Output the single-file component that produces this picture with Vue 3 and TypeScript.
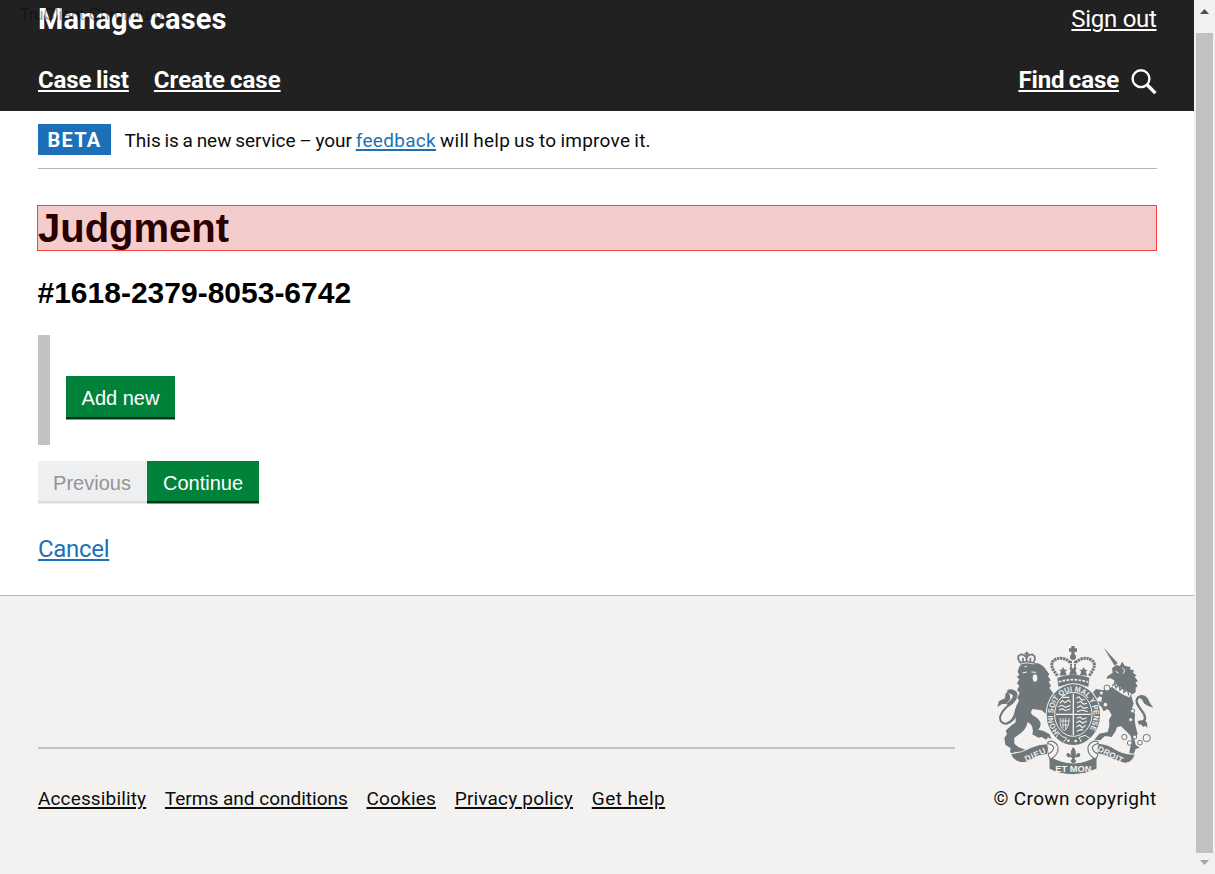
<script setup lang="ts">
interface FooterLink {
  label: string
  key: string
}

const footerLinks: FooterLink[] = [
  { label: 'Accessibility', key: 'accessibility' },
  { label: 'Terms and conditions', key: 'terms' },
  { label: 'Cookies', key: 'cookies' },
  { label: 'Privacy policy', key: 'privacy' },
  { label: 'Get help', key: 'help' },
]
</script>

<template>
  <div class="window">
    <div class="page">
      <header class="header">
        <div class="watermark">TruClient Chromium</div>
        <div class="header-top">
          <a class="service-name">Manage cases</a>
          <a class="sign-out">Sign out</a>
        </div>
        <nav class="header-nav">
          <a class="nav-link case-list">Case list</a>
          <a class="nav-link create-case">Create case</a>
          <a class="nav-link find">Find case</a>
          <svg class="search" viewBox="0 0 26 26" width="26" height="26">
            <circle cx="10" cy="9.7" r="8.4" fill="none" stroke="#fff" stroke-width="2.4" />
            <path d="M15.8 15.5 L24.4 24.1" stroke="#fff" stroke-width="3.4" />
          </svg>
        </nav>
      </header>

      <main class="main">
        <div class="phase">
          <strong class="tag">BETA</strong>
          <span class="phase-text">This is a new service – your <a class="link feedback">feedback</a><span class="phase-tail"> will help us to improve it.</span></span>
        </div>
        <h1 class="title">Judgment</h1>
        <h2 class="case-ref">#1618-2379-8053-6742</h2>
        <div class="collection"><button class="btn add">Add new</button></div>
        <div class="actions">
          <button class="btn previous" disabled>Previous</button>
          <button class="btn continue">Continue</button>
        </div>
        <a class="link cancel">Cancel</a>
      </main>

      <footer class="footer">
        <div class="footer-top">
          <div class="rule"></div>
          <svg class="crest" viewBox="33 30 474 390" width="158" height="130">
            <defs>
              <path id="motto-arc" d="M222 291 A61 71 0 1 1 308 291" />
            </defs>
            <g fill="#6f777b">
              <!-- lion -->
              <path d="M107 92 L104 82 Q126 74 147 82 L146 90 Z" />
              <path d="M103 94 Q127 82 159 85 Q176 91 184 106 L193 118 L189 124 L197 136 L191 140 L198 152 L193 159 L203 172 L208 190 L196 226 L203 250 L198 262 L190 256 L186 240 L170 226 L143 222 Q133 232 143 241 Q160 249 166 262 Q169 276 160 284 L176 288 L194 298 L200 313 L189 307 L184 314 L170 306 L160 308 L142 298 Q147 280 137 268 L128 261 Q124 285 100 300 L88 308 L88 326 L100 336 L123 345 L119 354 L110 351 L103 360 L92 351 L84 357 L75 351 L77 340 L61 329 L58 309 L66 298 L62 287 L78 272 L92 262 L92 248 Q88 232 94 212 L102 197 L97 188 L104 174 L96 165 L103 153 L96 145 L103 133 L95 126 L103 120 L98 110 Z" />
              <!-- supporter paws on the shield -->
              <path d="M182 208 L194 222 L206 252 L192 262 L184 250 L190 246 L180 226 Z" />
            </g>
            <g fill="none" stroke="#6f777b" stroke-linecap="round">
              <path d="M106 82 Q94 68 104 60 Q115 55 124 68 Q134 55 145 60 Q154 68 146 82" stroke-width="6" stroke-dasharray="4 5.5" />
              <path d="M125 50 V80 M114 68 V80 M136 68 V80 M119 56 H131" stroke-width="5" stroke-linecap="butt" />
              <!-- lion tail -->
              <path d="M98 224 Q92 256 66 266 Q45 268 45 246 Q50 226 78 205" stroke-width="6" />
              <path d="M66 264 Q88 256 93 222" stroke-width="5" />
            </g>
            <g fill="#6f777b">
              <path d="M68 164 Q88 160 97 174 Q100 190 84 206 L72 214 L64 206 Q84 190 84 182 Q76 172 64 178 Z" />
              <path d="M62 173 L74 178 L76 192 L64 206 L50 208 L37 216 L42 198 L60 190 Z" />
              <!-- unicorn -->
              <path d="M356 38 L398 84 L389 92 Z" />
              <path d="M381 100 L394 90 L405 93 L411 80 L420 93 L437 96 L434 103 L447 106 L444 113 L454 121 L449 126 L459 139 L451 142 L458 154 L452 158 L452 172 L438 180 L446 206 L441 219 L450 238 L449 256 L452 274 L458 298 L448 313 L452 329 L464 338 L452 342 L446 358 L433 354 L436 336 L441 323 L437 303 L424 289 L408 274 L396 276 L392 288 L380 306 L360 303 L346 316 L328 314 L343 296 L368 291 L373 274 L372 254 L380 240 L372 226 L358 216 L349 202 L351 187 L343 184 L334 194 L325 196 L329 182 L324 172 L333 162 L354 166 L376 158 L386 154 L388 136 L376 130 L364 131 L367 124 L383 113 Z" />
              <path d="M331 195 L324 204 L332 214 L348 213 L356 229 L366 223 L361 210 L348 200 Z" />
              <path d="M478 254 L486 264 L487 278 L480 272 L474 276 L468 268 L462 270 L458 258 Z" />
              <path d="M456 186 Q474 172 488 190 Q494 206 505 218 L488 212 L478 206 L470 192 Z" />
            </g>
            <path d="M472 264 Q486 252 476 236 L461 214 Q448 194 462 186 Q474 182 484 196" fill="none" stroke="#6f777b" stroke-width="7" />
            <!-- crown -->
            <g fill="#6f777b">
              <path d="M217 128 Q240 119 265 119 Q290 119 313 128 L310 155 Q264 142 220 155 Z" />
              <path d="M259 33 H269 V40 H276 V50 H269 V59 H259 V50 H252 V40 H259 Z" />
              <circle cx="264" cy="66" r="9" />
              <path d="M223 122 L228 110 L222 104 H230 L234 96 L239 104 H247 L241 110 L245 120 Z M285 120 L289 110 L283 104 H291 L296 96 L300 104 H308 L302 110 L307 122 Z M252 119 L257 106 L252 100 H276 L271 106 L277 119 Z" />
            </g>
            <g fill="none" stroke="#6f777b">
              <path d="M217 122 L207 108 Q193 86 208 75 Q232 62 256 82" stroke-width="9" stroke-dasharray="7 2" />
              <path d="M313 122 L322 108 Q335 86 320 75 Q296 62 272 82" stroke-width="9" stroke-dasharray="7 2" />
              <path d="M258 78 V104 M270 78 V104" stroke-width="6" stroke-dasharray="6 2" />
            </g>
            <g stroke="#f3f2f1" fill="none">
              <path d="M221 141 Q264 127 309 141" stroke-width="5" stroke-dasharray="8 4" />
              <path d="M105 87 Q126 80 147 87" stroke-width="2.5" />
              <path d="M112 114 L126 111 M139 111 L153 112 M118 96 L126 93" stroke-width="3" />
              <path d="M381 146 Q408 170 436 181" stroke-width="14" />
              <path d="M392 109 L401 114 M411 98 L420 106 L414 116" stroke-width="3" />
            </g>
            <ellipse cx="150" cy="129" rx="7" ry="11" fill="#f3f2f1" />
            <path d="M382 153 L389 145 L393 158 L402 148 L405 165 L414 156 L417 172 L428 163 L431 181" fill="none" stroke="#6f777b" stroke-width="4" />
            <!-- garter and shield -->
            <ellipse cx="265" cy="239" rx="83" ry="94" fill="#f3f2f1" />
            <ellipse cx="265" cy="239" rx="80" ry="91" fill="#6f777b" />
            <ellipse cx="265" cy="238" rx="56" ry="66" fill="#6f777b" stroke="#f3f2f1" stroke-width="3" />
            <g fill="none" stroke="#f3f2f1">
              <path d="M265 176 V301 M213 238 H317" stroke-width="4" />
              <path d="M225 205 L232 196 L240 203 L251 195 L257 203 M220 215 L230 211 L242 217 L257 211 M222 226 L232 221 L242 227 L256 221 M232 187 H253 M274 190 L282 185 L290 195 L299 193 M276 204 L287 199 L295 207 L306 205 M276 218 L287 212 L296 220 L308 217 M276 230 L290 225 L308 230 M275 250 L285 246 L293 253 L305 248 M274 263 L284 258 L293 265 L306 258 M274 276 L284 270 L292 278 L302 271 M275 289 L287 284 L295 285" stroke-width="3.5" />
              <path d="M226 249 Q223 281 239 287 Q253 275 252 249 M234 249 V279 M242 248 V282 M228 258 H253 M231 270 H250" stroke-width="2.5" />
              <path d="M214 306 L221 293 L232 305 L245 309 L235 322 M289 321 L282 308 L300 301 L314 310" stroke-width="3" />
            </g>
            <text class="motto" fill="#f3f2f1" font-size="23"><textPath href="#motto-arc" textLength="306" lengthAdjust="spacingAndGlyphs">HONI SOIT QUI MAL Y PENSE</textPath></text>
            <g fill="#f3f2f1">
              <circle cx="250" cy="317" r="4" /><circle cx="272" cy="318" r="4" />
            </g>
            <!-- ribbon -->
            <g fill="#6f777b" stroke="#f3f2f1" stroke-width="3">
              <path d="M77 356 Q111 354 139 337 Q163 326 188 326 Q193 344 188 358 Q158 361 137 375 Q117 389 96 379 Q79 370 77 356 Z" />
              <path d="M340 325 Q369 327 391 343 Q421 360 451 357 Q442 384 420 385 Q400 379 384 373 Q359 358 337 356 Q334 340 340 325 Z" />
              <path d="M192 362 Q230 384 265 384 Q301 384 336 362 V402 Q299 419 265 419 Q224 419 192 402 Z" />
            </g>
            <g fill="#f3f2f1" stroke="#6f777b" stroke-width="3.5">
              <path d="M188 326 Q187 316 203 319 Q225 330 218 350 Q212 366 196 372 Q188 364 190 356 Q206 350 206 337 Q201 327 188 326 Z" />
              <path d="M340 326 Q341 316 325 319 Q303 330 310 350 Q316 366 332 372 Q340 364 338 356 Q322 350 322 337 Q327 327 340 326 Z" />
            </g>
            <path d="M265 336 Q253 350 260 363 Q250 348 244 358 Q245 370 257 366 L262 370 L256 379 L265 386 L274 379 L268 370 L273 366 Q285 370 286 358 Q280 348 270 363 Q277 350 265 336 Z" fill="#6f777b" />
            <g class="ribbon-text" fill="#f3f2f1">
              <text x="124" y="381" font-size="25" textLength="66" transform="rotate(-25 124 381)">DIEU</text>
              <text x="211" y="410" font-size="26" textLength="108" lengthAdjust="spacingAndGlyphs">ET MON</text>
              <text x="336" y="347" font-size="25" textLength="82" transform="rotate(27 336 347)">DROIT</text>
            </g>
            <g fill="#f3f2f1" stroke="#6f777b" stroke-width="3">
              <circle cx="366" cy="159" r="9" /><circle cx="349" cy="174" r="6" />
              <circle cx="361" cy="209" r="7" />
              <circle cx="443" cy="228" r="6" /><circle cx="437" cy="254" r="6" />
              <circle cx="418" cy="306" r="8" /><circle cx="434" cy="324" r="7" />
              <circle cx="449" cy="306" r="6" /><circle cx="465" cy="323" r="7" />
              <circle cx="485" cy="309" r="11" />
            </g>
          </svg>
        </div>
        <div class="footer-bottom">
          <nav class="footer-links">
            <a v-for="link in footerLinks" :key="link.key" :class="['footer-link', link.key]">{{ link.label }}</a>
          </nav>
          <span class="copyright">© Crown copyright</span>
        </div>
      </footer>
    </div>

    <div class="scrollbar">
      <svg width="9" height="5" viewBox="0 0 9 5"><path d="M0 5 L4.5 0 L9 5 Z" fill="#505050" /></svg>
      <div class="thumb"></div>
      <svg width="9" height="5" viewBox="0 0 9 5"><path d="M0 0 L4.5 5 L9 0 Z" fill="#a3a3a3" /></svg>
    </div>
  </div>
</template>

<style>
body {
  margin: 0;
  overflow: hidden;
}
</style>

<style scoped>
.window {
  display: flex;
  width: 1215px;
  height: 874px;
  overflow: hidden;
  background: #fff;
  font-family: Roboto, "Liberation Sans", sans-serif;
  color: #0b0c0c;
}
.page {
  display: flex;
  flex-direction: column;
  width: 1194px;
}
.header {
  position: relative;
  box-sizing: border-box;
  height: 111px;
  padding: 0 37px 0 38px;
  background: #212121;
  color: #fff;
}
.watermark {
  position: absolute;
  left: 20px;
  top: 5px;
  font: 16px/20px "Liberation Sans", sans-serif;
  color: rgba(0, 0, 0, 0.4);
  white-space: nowrap;
}
.header-top {
  display: flex;
  justify-content: space-between;
  height: 60px;
}
.service-name {
  font-size: 29px;
  font-weight: 700;
  line-height: 38px;
  letter-spacing: 0.1px;
  word-spacing: -1px;
}
.sign-out {
  margin-right: 0.5px;
  font-size: 24px;
  line-height: 38px;
  letter-spacing: -0.3px;
}
.sign-out,
.nav-link,
.link,
.footer-link {
  text-decoration: underline;
  text-decoration-thickness: 2px;
  text-underline-offset: 2px;
}
.header-nav {
  display: flex;
  align-items: center;
  height: 40px;
}
.nav-link {
  font-size: 24px;
  font-weight: 700;
  line-height: 40px;
}
.case-list {
  letter-spacing: -0.1px;
  word-spacing: -1.2px;
}
.create-case {
  margin-left: 25px;
  word-spacing: -1px;
}
.find {
  margin-left: auto;
  margin-right: 12px;
  letter-spacing: -0.1px;
  word-spacing: -1.6px;
}
.search {
  margin-top: 3px;
}
.main {
  display: flex;
  flex-direction: column;
  align-items: flex-start;
  box-sizing: border-box;
  height: 484px;
  padding: 0 37px 0 38px;
}
.phase {
  display: flex;
  align-items: center;
  box-sizing: border-box;
  width: 100%;
  height: 58px;
  border-bottom: 1px solid #b1b4b6;
}
.tag {
  box-sizing: border-box;
  width: 73px;
  height: 31px;
  margin-right: 13.5px;
  background: #1d70b8;
  color: #fff;
  font-size: 20px;
  line-height: 32px;
  letter-spacing: 1.25px;
  text-align: center;
}
.phase-text {
  padding-top: 2px;
  font-size: 19px;
  line-height: 28px;
  word-spacing: -1px;
}
.feedback {
  letter-spacing: 0.3px;
}
.phase-tail {
  letter-spacing: 0.25px;
  word-spacing: -0.9px;
}
.link {
  color: #1d70b8;
}
.title {
  box-sizing: border-box;
  width: 1120px;
  height: 46px;
  margin: 36px 0 0 -1px;
  border: 1px solid #fa4444;
  background: #f4cccc;
  color: #2a0000;
  font: bold 40px/44px "Liberation Sans", sans-serif;
}
.case-ref {
  margin: 23px 0 0 -0.5px;
  color: #000;
  font: bold 30px/38px "Liberation Sans", sans-serif;
}
.collection {
  box-sizing: border-box;
  height: 110px;
  margin-top: 23px;
  padding: 41px 0 0 16px;
  border-left: 12px solid #bfc1c3;
}
.btn {
  display: block;
  height: 41px;
  padding: 3px 0 0;
  border: 0;
  background: #00823b;
  box-shadow: 0 2.5px 0 #003618;
  color: #fff;
  font: 20px/38px "Liberation Sans", sans-serif;
}
.add {
  width: 109px;
}
.actions {
  display: flex;
  margin-top: 16px;
}
.actions .btn {
  height: 40px;
  padding-top: 4px;
  line-height: 36px;
}
.actions .previous {
  width: 109px;
  padding-right: 1px;
  background: #eeeff0;
  box-shadow: 0 2.5px 0 #dcdfe1;
  color: #949494;
}
.continue {
  width: 112px;
}
.cancel {
  margin-top: 30px;
  font-size: 24px;
  line-height: 36px;
  letter-spacing: -0.3px;
}
.footer {
  box-sizing: border-box;
  height: 279px;
  padding: 49px 37px 0 38px;
  border-top: 1px solid #b1b4b6;
  background: #f3f2f1;
}
.footer-top {
  display: flex;
  justify-content: space-between;
  height: 130px;
  padding-right: 3px;
}
.rule {
  width: 917px;
  height: 2px;
  margin-top: 102px;
  background: #bfc1c3;
}
.motto,
.ribbon-text {
  font-family: "Liberation Sans", sans-serif;
  font-weight: 700;
}
.footer-bottom {
  display: flex;
  justify-content: space-between;
  margin-top: 10px;
  font-size: 19px;
  line-height: 28px;
}
.footer-links {
  display: flex;
  gap: 18.7px;
}
.accessibility {
  letter-spacing: 0.14px;
}
.cookies {
  letter-spacing: 0.2px;
}
.privacy {
  letter-spacing: 0.18px;
}
.help {
  letter-spacing: 0.45px;
}
.copyright {
  margin-right: 0.5px;
  letter-spacing: 0.33px;
}
.scrollbar {
  display: flex;
  flex-direction: column;
  align-items: center;
  box-sizing: border-box;
  width: 21px;
  height: 874px;
  padding-top: 9px;
  background: #f1f1f1;
}
.thumb {
  width: 17px;
  height: 820px;
  margin: 19px 0 7px;
  background: #c1c1c1;
}
</style>
